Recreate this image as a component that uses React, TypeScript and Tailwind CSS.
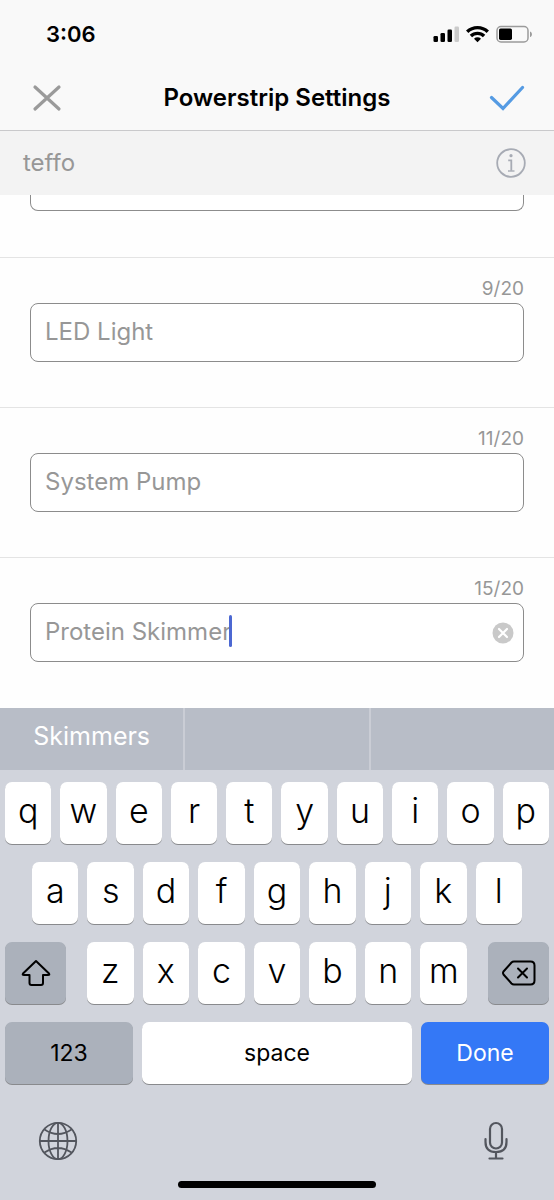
import { useState, type ReactNode } from "react";

function StatusBar() {
  return (
    <div className="flex h-[66px] items-center justify-between pt-[2px] pr-[21px] pl-[46px]">
      <span className="text-[22px] leading-8 font-semibold">3:06</span>
      <svg width="100" height="20" viewBox="0 0 100 20" aria-hidden="true">
        <rect x="0.5" y="12" width="4.5" height="6" rx="1.3" />
        <rect x="7.5" y="9" width="4.5" height="9" rx="1.3" />
        <rect x="14.5" y="5.5" width="4.5" height="12.5" rx="1.3" />
        <rect x="21.5" y="2.5" width="4.5" height="15.5" rx="1.3" fill="#cbcbcb" />
        <g fill="none" stroke="#000" strokeWidth="3.4">
          <path d="M34.2 7.8a14.8 14.8 0 0 1 20.6 0" />
          <path d="M37.9 12a9.500 9.500 0 0 1 13.200 0" />
        </g>
        <path d="M44.500 18.200l-3.500-3.500a4.900 4.900 0 0 1 7 0z" />
        <rect x="64" y="2.500" width="31" height="15.500" rx="4" fill="none" stroke="#9b9b9b" strokeWidth="1.500" />
        <rect x="66" y="4.600" width="13" height="11.300" rx="1.600" />
        <path d="M97 7.500c2.600.6 2.600 5 0 5.600z" fill="#9b9b9b" />
      </svg>
    </div>
  );
}

function Header() {
  return (
    <header className="border-b border-[#c9c9cb] bg-[#f9f9f9]">
      <StatusBar />
      <div className="flex h-16 items-center justify-between px-[29px]">
        <button type="button" aria-label="Close" className="flex w-9 justify-center">
          <svg width="30" height="30" viewBox="0 0 30 30" fill="none" stroke="#9a9a9a" strokeWidth="3.2" strokeLinecap="round">
            <path d="M3 4l24 22M27 4l-24 22" />
          </svg>
        </button>
        <h1 className="text-[24px] leading-8 font-semibold">Powerstrip Settings</h1>
        <button type="button" aria-label="Save" className="flex w-9 justify-center">
          <svg width="36" height="26" viewBox="0 0 36 26" fill="none" stroke="#559be3" strokeWidth="3.2" strokeLinecap="round">
            <path d="M2.500 12.500l11.500 11L33.500 2.500" />
          </svg>
        </button>
      </div>
    </header>
  );
}

function DeviceBar() {
  return (
    <div className="flex h-16 items-center justify-between bg-[#f3f3f3] pr-7 pl-[23px] text-[#979797]">
      <span className="text-[24px] leading-8">teffo</span>
      <button type="button" aria-label="Information">
        <svg width="30" height="30" viewBox="0 0 30 30" fill="none" stroke="#a7abb4">
          <circle cx="15" cy="15" r="13.800" strokeWidth="1.800" />
          <circle cx="15" cy="7.700" r="1.600" fill="#a7abb4" stroke="none" />
          <path d="M12.200 12.300h3.100v10.500" strokeWidth="1.800" />
          <path d="M12 23h6.500" strokeWidth="1.400" />
        </svg>
      </button>
    </div>
  );
}

const outlets = [
  { id: "outlet-2", count: "9/20", name: "LED Light" },
  { id: "outlet-3", count: "11/20", name: "System Pump" },
  { id: "outlet-4", count: "15/20", name: "Protein Skimmer", active: true },
];

function OutletField({ id, count, name, active }: { id: string; count: string; name: string; active?: boolean }) {
  const [value, setValue] = useState(name);
  return (
    <div className="h-[150px] border-t border-[#e4e4e4] px-[30px] pt-[18px] text-[#979797]">
      <label htmlFor={id} className="block h-[27px] text-right text-[19px] leading-[26px]">
        {count}
      </label>
      <div className="relative">
        <input
          id={id}
          type="text"
          maxLength={20}
          value={value}
          onChange={(e) => setValue(e.target.value)}
          className="block h-[59px] w-full rounded-lg border border-[#8c8c8c] bg-white px-[14px] pb-[3px] text-[24px] outline-none"
        />
        {active && (
          <>
            <span className="absolute top-3 left-[199px] h-8 w-[3px] rounded-full bg-[#4c68d2]" />
            <button type="button" aria-label="Clear text" onClick={() => setValue("")} className="absolute top-[19px] right-[10px]">
              <svg width="22" height="22" viewBox="0 0 22 22">
                <circle cx="11" cy="11" r="10.500" fill="#c9c9c9" />
                <path d="M7 7l8 8M15 7l-8 8" stroke="#fff" strokeWidth="2.200" strokeLinecap="round" />
              </svg>
            </button>
          </>
        )}
      </div>
    </div>
  );
}

function LetterKey({ children }: { children: string }) {
  return (
    <button type="button" className="flex h-[62px] min-w-0 flex-1 basis-0 items-center justify-center rounded-[7px] bg-white pb-1 text-[34px] leading-10 font-light shadow-[0_1px_0_#898a8d]">
      {children}
    </button>
  );
}

function SpecialKey({ label, className, children }: { label?: string; className: string; children: ReactNode }) {
  return (
    <button type="button" aria-label={label} className={`flex h-[62px] items-center justify-center rounded-[7px] text-[23px] leading-8 shadow-[0_1px_0_#898a8d] ${className}`}>
      {children}
    </button>
  );
}

function Keyboard() {
  return (
    <section aria-label="Keyboard" className="bg-[#d1d4dc]">
      <div className="flex h-[62px] bg-[#b8bdc7] text-[25px] text-white">
        <button type="button" className="flex-1 basis-0 pb-1">Skimmers</button>
        <button type="button" aria-label="Second suggestion" className="flex-1 basis-0 border-x-2 border-[#cacdd5]" />
        <button type="button" aria-label="Third suggestion" className="flex-1 basis-0" />
      </div>
      <div className="flex flex-col gap-[18px] px-[5px] pt-3">
        <div className="flex gap-[9px]">
          {"qwertyuiop".split("").map((k) => <LetterKey key={k}>{k}</LetterKey>)}
        </div>
        <div className="flex gap-[9px] px-[27px]">
          {"asdfghjkl".split("").map((k) => <LetterKey key={k}>{k}</LetterKey>)}
        </div>
        <div className="flex gap-[21px]">
          <SpecialKey label="Shift" className="w-[61px] bg-[#abb1bb]">
            <svg width="30" height="28" viewBox="0 0 30 28" fill="none" stroke="#000" strokeWidth="2" strokeLinejoin="round">
              <path d="M15 2L28 14.500q1 1.500-1 1.500H22v8q0 2-2 2H10.500q-2 0-2-2V16H3q-2 0-1-1.500z" />
            </svg>
          </SpecialKey>
          <div className="flex flex-1 gap-[9px]">
            {"zxcvbnm".split("").map((k) => <LetterKey key={k}>{k}</LetterKey>)}
          </div>
          <SpecialKey label="Delete" className="w-[61px] bg-[#abb1bb]">
            <svg width="34" height="26" viewBox="0 0 34 26" fill="none" stroke="#000" strokeWidth="2" strokeLinecap="round" strokeLinejoin="round">
              <path d="M12 1.500H28.500q4 0 4 4v15q0 4-4 4H12q-1.500 0-2.500-1L1.500 14.500q-1-1.500 0-3L9.500 2.500q1-1 2.500-1z" />
              <path d="M16 8.500l9 9M25 8.500l-9 9" />
            </svg>
          </SpecialKey>
        </div>
        <div className="flex gap-[9px]">
          <SpecialKey className="w-32 bg-[#abb1bb]">123</SpecialKey>
          <SpecialKey className="flex-1 bg-white">space</SpecialKey>
          <SpecialKey className="w-32 bg-[#3478f6] text-white">Done</SpecialKey>
        </div>
      </div>
      <div className="flex items-center justify-between pt-[37px] pr-[46px] pl-[38px]">
        <button type="button" aria-label="Next keyboard">
          <svg width="40" height="40" viewBox="0 0 40 40" fill="none" stroke="#53565e" strokeWidth="1.800">
            <circle cx="20" cy="20" r="18.200" />
            <ellipse cx="20" cy="20" rx="9.500" ry="18.200" />
            <path d="M20 2v36M2 20h36M6.500 8.500q13.500 9 27 0M6.500 31.500q13.500-9 27 0" />
          </svg>
        </button>
        <button type="button" aria-label="Dictate">
          <svg width="24" height="40" viewBox="0 0 24 40" fill="none" stroke="#53565e" strokeWidth="2.200" strokeLinecap="round">
            <rect x="6" y="2" width="12" height="25.500" rx="6" />
            <path d="M1.500 18v3q0 10 10.500 10t10.500-10v-3M12 31v6.500M5.500 37.500h13" />
          </svg>
        </button>
      </div>
      <div className="flex justify-center pt-5 pb-3">
        <div className="h-[7px] w-[198px] rounded-full bg-black" />
      </div>
    </section>
  );
}

export default function App() {
  return (
    <div className="flex min-h-screen flex-col bg-[#fefefe] font-['Inter',sans-serif] text-black">
      <Header />
      <DeviceBar />
      <main className="flex-1">
        <div className="h-[62px] px-[30px]">
          <div className="h-4 rounded-b-lg border-x border-b border-[#8c8c8c] bg-white" />
        </div>
        {outlets.map((outlet) => <OutletField key={outlet.id} {...outlet} />)}
      </main>
      <Keyboard />
    </div>
  );
}
